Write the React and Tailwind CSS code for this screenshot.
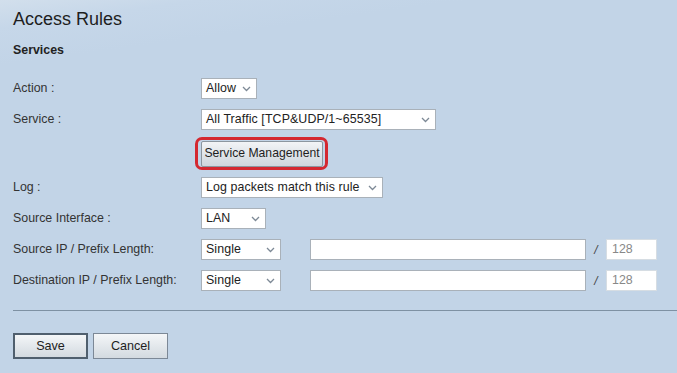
import React from 'react'

function Chevron() {
  return (
    <svg width="9" height="6" viewBox="0 0 9 6" className="shrink-0">
      <path d="M1 1l3.5 3.5L8 1" fill="none" stroke="#7d8996" strokeWidth="1.3" />
    </svg>
  )
}

function Select({ value, width }) {
  return (
    <div
      className={`flex h-[21px] items-center justify-between border border-[#a9b1b9] bg-white pl-[4px] pr-[5px] text-[12.4px] tracking-[0.1px] text-[#222] ${width}`}
    >
      <span className="whitespace-nowrap">{value}</span>
      <Chevron />
    </div>
  )
}

function Row({ label, children, tall }) {
  return (
    <div className={`flex items-center ${tall ? 'h-[37px]' : 'h-[31px]'}`}>
      <div className="w-[188px] shrink-0 text-[12.4px] text-[#333]">{label}</div>
      <div className="flex items-center">{children}</div>
    </div>
  )
}

function IpInputs() {
  return (
    <>
      <div className="ml-[29px] h-[21px] w-[276px] border border-[#a9b1b9] bg-white" />
      <span className="w-[20px] text-center text-[12px] italic text-[#444]">/</span>
      <div className="flex h-[21px] w-[51px] items-center border border-[#d6dde3] bg-white pl-[5px] text-[12.4px] text-[#888]">
        128
      </div>
    </>
  )
}

export default function App() {
  return (
    <div
      className="h-[373px] w-[677px] overflow-hidden bg-[#c2d4e7] font-['Liberation_Sans',Arial,sans-serif]"
      style={{ backgroundImage: 'linear-gradient(172deg, #d2dfec 0%, #c6d7e9 6%, #c2d4e7 14%)' }}
    >
      <div className="pl-[13px]">
        <h1 className="mt-[9px] text-[18px] leading-[21px] text-[#1e1e1e]">Access Rules</h1>
        <h2 className="mt-[13px] text-[12.4px] font-bold leading-[14px] text-[#222]">Services</h2>

        <div className="mt-[16px]">
          <Row label="Action :">
            <Select value="Allow" width="w-[56px]" />
          </Row>
          <Row label="Service :">
            <Select value="All Traffic [TCP&UDP/1~65535]" width="w-[235px]" />
          </Row>
          <Row label="" tall>
            <div className="-ml-[6px] rounded-[7px] border-[3px] border-[#d42830] py-0 pl-[3px] pr-[2px]">
              <button className="h-[26px] w-[122px] rounded-[2px] border border-[#8c969f] bg-gradient-to-b from-[#f2f4f6] to-[#cfd6dd] text-[12.2px] text-[#1e1e1e]">
                Service Management
              </button>
            </div>
          </Row>
          <Row label="Log :">
            <Select value="Log packets match this rule" width="w-[182px]" />
          </Row>
          <Row label="Source Interface :">
            <Select value="LAN" width="w-[65px]" />
          </Row>
          <Row label="Source IP / Prefix Length:">
            <Select value="Single" width="w-[80px]" />
            <IpInputs />
          </Row>
          <Row label="Destination IP / Prefix Length:">
            <Select value="Single" width="w-[80px]" />
            <IpInputs />
          </Row>
        </div>

        <div className="mt-[14px] border-t border-[#7e91a3]" />

        <div className="mt-[22px] flex gap-[5px]">
          <button className="h-[26px] w-[75px] border-2 border-[#4f5f6e] bg-gradient-to-b from-[#f4f6f8] to-[#d3dae0] text-[12.6px] text-[#1e1e1e]">
            Save
          </button>
          <button className="h-[26px] w-[75px] border border-[#7c8896] bg-gradient-to-b from-[#f4f6f8] to-[#d3dae0] text-[12.6px] text-[#1e1e1e]">
            Cancel
          </button>
        </div>
      </div>
    </div>
  )
}
